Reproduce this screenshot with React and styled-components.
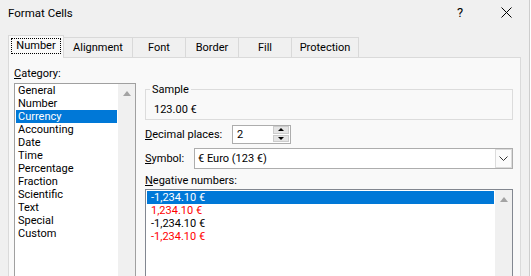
import React from 'react';
import styled, { createGlobalStyle } from 'styled-components';

const GlobalStyle = createGlobalStyle`
    html, body {
        margin: 0;
        padding: 0;
        background: #fff;
    }
    body {
        font-family: Roboto, "Liberation Sans", sans-serif;
        font-size: 11px;
        color: #000;
    }
`;

const Viewport = styled.div`
    width: 531px;
    height: 276px;
    overflow: hidden;
`;

const Dialog = styled.div`
    box-sizing: border-box;
    width: 530px;
    height: 400px;
    background: #f0f0f0;
    border-right: 1px solid #cdcdcd;
    display: flex;
    flex-direction: column;
`;

const TitleBar = styled.div`
    height: 28px;
    display: flex;
    align-items: flex-start;
`;

const Title = styled.div`
    padding: 6px 0 0 8px;
    line-height: 15px;
    font-size: 11.5px;
    flex: 1;
`;

const TitleButton = styled.div`
    width: 46px;
    height: 28px;
    display: flex;
    align-items: center;
    justify-content: center;
    font-size: 13px;
    padding-bottom: 3px;
    box-sizing: border-box;
`;

const TabRow = styled.div`
    display: flex;
    align-items: flex-end;
    margin: 7px 0 0 8px;
    position: relative;
    z-index: 1;
`;

const Tab = styled.div`
    box-sizing: border-box;
    width: ${(p) => p.width}px;
    height: ${(p) => (p.active ? 23 : 20)}px;
    margin-bottom: ${(p) => (p.active ? -1 : 0)}px;
    margin-left: -1px;
    &:first-child {
        margin-left: 0;
    }
    border: 1px solid #d9d9d9;
    border-bottom: none;
    background: ${(p) => (p.active ? '#f9f9f9' : '#f0f0f0')};
    text-align: center;
    line-height: 15px;
    padding-top: ${(p) => (p.active ? 0 : 2)}px;
`;

const FocusRing = styled.span`
    display: block;
    margin: 2px 2px 0;
    border: 1px dotted #000;
    line-height: 14px;
`;

const Panel = styled.div`
    box-sizing: border-box;
    width: 513px;
    margin-left: 8px;
    flex: 1;
    border: 1px solid #dadada;
    background: #f9f9f9;
    padding: 8px 7px 0 5px;
    display: flex;
    gap: 9px;
`;

const LeftColumn = styled.div`
    width: 122px;
    display: flex;
    flex-direction: column;
`;

const RightColumn = styled.div`
    flex: 1;
    display: flex;
    flex-direction: column;
    padding-top: 16px;
`;

const Label = styled.div`
    line-height: 15px;
    width: ${(p) => (p.width ? `${p.width}px` : 'auto')};
    margin-top: ${(p) => p.top || 0}px;
    flex-shrink: 0;
    white-space: nowrap;
`;

const ListBox = styled.div`
    flex: 1;
    display: flex;
    margin-top: ${(p) => p.top}px;
    background: #fff;
    border: 1px solid ${(p) => p.edge};
`;

const Items = styled.div`
    flex: 1;
    padding-top: ${(p) => p.pad}px;
`;

const Item = styled.div`
    height: 13px;
    line-height: 13px;
    margin: 0 1px;
    padding-left: ${(p) => p.indent}px;
    white-space: nowrap;
    background: ${(p) => (p.selected ? '#0078d7' : 'transparent')};
    color: ${(p) => (p.selected ? '#fff' : p.red ? '#ff0000' : '#000')};
`;

const ScrollTrack = styled.div`
    width: 17px;
    background: #f0f0f0;
    display: flex;
    justify-content: center;
    padding-top: 7px;
    box-sizing: border-box;
`;

const Fieldset = styled.fieldset`
    box-sizing: border-box;
    height: 38px;
    margin: 0;
    border: 1px solid #dcdcdc;
    padding: 5px 8px 0;
    legend {
        margin-left: -4px;
        padding: 0 2px;
        line-height: 15px;
    }
`;

const SampleValue = styled.div`
    line-height: 15px;
`;

const FieldRow = styled.div`
    display: flex;
    align-items: center;
    margin-top: ${(p) => p.top}px;
`;

const SpinBox = styled.div`
    box-sizing: border-box;
    width: 59px;
    height: 19px;
    border: 1px solid #adadad;
    background: #fff;
    display: flex;
`;

const SpinValue = styled.div`
    flex: 1;
    line-height: 17px;
    padding-left: 4px;
`;

const SpinButtons = styled.div`
    width: 16px;
    display: flex;
    flex-direction: column;
    gap: 1px;
    padding: 0 1px 1px 0;
`;

const SpinButton = styled.div`
    flex: 1;
    background: #e5e5e5;
    border: 1px solid #cccccc;
    display: flex;
    align-items: center;
    justify-content: center;
`;

const ComboBox = styled.div`
    box-sizing: border-box;
    flex: 1;
    height: 21px;
    border: 1px solid #adadad;
    background: #fff;
    display: flex;
`;

const ComboText = styled.div`
    flex: 1;
    line-height: 19px;
    padding-left: 3px;
`;

const DropButton = styled.div`
    box-sizing: border-box;
    width: 17px;
    border: 1px solid #dcdcdc;
    background: #fbfbfb;
    display: flex;
    align-items: center;
    justify-content: center;
`;

const UpArrow = ({ color = '#a3a3a3', w = 8, h = 5 }) => (
    <svg width={w} height={h} viewBox={`0 0 ${w} ${h}`}>
        <polygon points={`0,${h} ${w / 2},0 ${w},${h}`} fill={color} />
    </svg>
);

const DownArrow = ({ w = 6, h = 3 }) => (
    <svg width={w} height={h} viewBox={`0 0 ${w} ${h}`}>
        <polygon points={`0,0 ${w},0 ${w / 2},${h}`} fill="#000" />
    </svg>
);

const categories = [
    'General', 'Number', 'Currency', 'Accounting', 'Date', 'Time',
    'Percentage', 'Fraction', 'Scientific', 'Text', 'Special', 'Custom',
];

const tabs = [
    { name: 'Number', width: 56 },
    { name: 'Alignment', width: 70 },
    { name: 'Font', width: 54 },
    { name: 'Border', width: 54 },
    { name: 'Fill', width: 54 },
    { name: 'Protection', width: 68 },
];

const negatives = [
    { text: '-1,234.10 €', selected: true },
    { text: '1,234.10 €', red: true },
    { text: '-1,234.10 €' },
    { text: '-1,234.10 €', red: true },
];

const App = () => (
    <Viewport>
        <GlobalStyle />
        <Dialog>
            <TitleBar>
                <Title>Format Cells</Title>
                <TitleButton>?</TitleButton>
                <TitleButton>
                    <svg width="11" height="11" viewBox="0 0 11 11">
                        <path d="M0.5 0.5 L10.5 10.5 M10.5 0.5 L0.5 10.5" stroke="#000" strokeWidth="1" />
                    </svg>
                </TitleButton>
            </TitleBar>
            <TabRow>
                {tabs.map((tab, idx) => (
                    <Tab key={tab.name} width={tab.width} active={idx === 0}>
                        {idx === 0 ? <FocusRing>{tab.name}</FocusRing> : tab.name}
                    </Tab>
                ))}
            </TabRow>
            <Panel>
                <LeftColumn>
                    <Label>
                        <u>C</u>ategory:
                    </Label>
                    <ListBox top={2} edge="#a0a0a0">
                        <Items pad={0}>
                            {categories.map((name) => (
                                <Item key={name} indent={2} selected={name === 'Currency'}>
                                    {name}
                                </Item>
                            ))}
                        </Items>
                        <ScrollTrack>
                            <UpArrow />
                        </ScrollTrack>
                    </ListBox>
                </LeftColumn>
                <RightColumn>
                    <Fieldset>
                        <legend>Sample</legend>
                        <SampleValue>123.00 €</SampleValue>
                    </Fieldset>
                    <FieldRow top={5}>
                        <Label width={87}>
                            <u>D</u>ecimal places:
                        </Label>
                        <SpinBox>
                            <SpinValue>2</SpinValue>
                            <SpinButtons>
                                <SpinButton>
                                    <UpArrow color="#000" w={6} h={3} />
                                </SpinButton>
                                <SpinButton>
                                    <DownArrow />
                                </SpinButton>
                            </SpinButtons>
                        </SpinBox>
                    </FieldRow>
                    <FieldRow top={4}>
                        <Label width={49}>
                            <u>S</u>ymbol:
                        </Label>
                        <ComboBox>
                            <ComboText>€ Euro (123 €)</ComboText>
                            <DropButton>
                                <svg width="9" height="5" viewBox="0 0 9 5">
                                    <path d="M0.5 0.5 L4.5 4.5 L8.5 0.5" stroke="#333" fill="none" />
                                </svg>
                            </DropButton>
                        </ComboBox>
                    </FieldRow>
                    <Label top={4}>
                        <u>N</u>egative numbers:
                    </Label>
                    <ListBox top={1} edge="#828790">
                        <Items pad={1}>
                            {negatives.map((n, idx) => (
                                <Item key={idx} indent={4} selected={n.selected} red={n.red}>
                                    {n.text}
                                </Item>
                            ))}
                        </Items>
                        <ScrollTrack>
                            <UpArrow />
                        </ScrollTrack>
                    </ListBox>
                </RightColumn>
            </Panel>
        </Dialog>
    </Viewport>
);

export default App;
